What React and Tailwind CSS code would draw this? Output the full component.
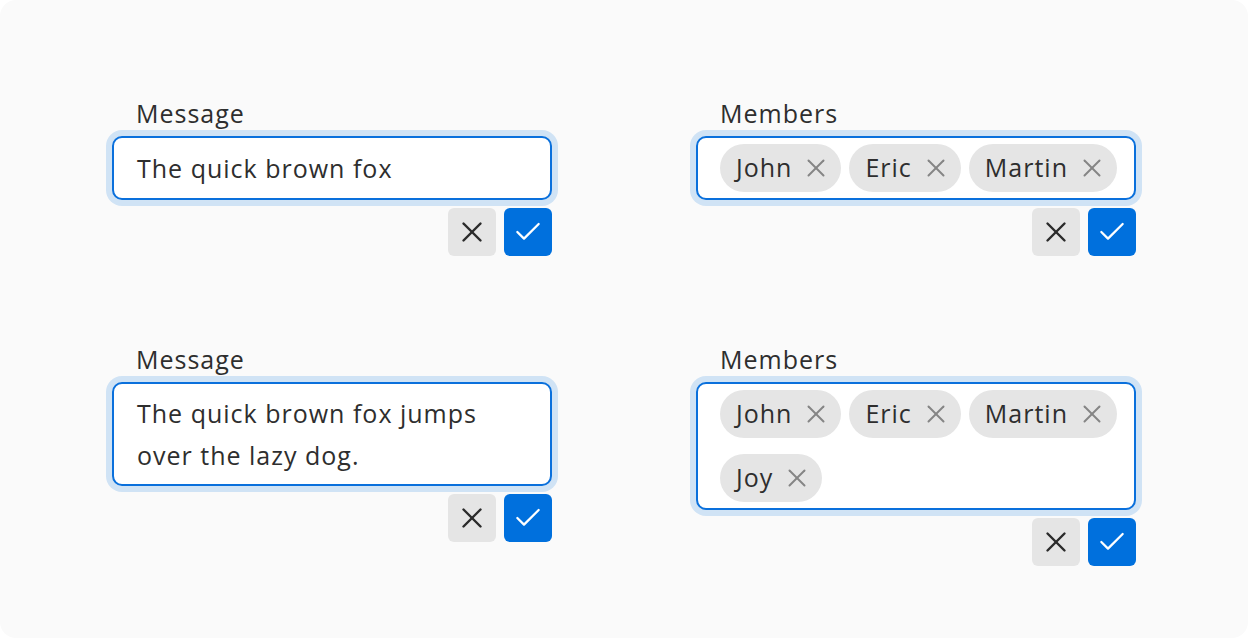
import { X, Check } from 'lucide-react';

function Actions() {
  return (
    <div className="mt-2 flex justify-end gap-2">
      <button className="grid h-12 w-12 place-items-center rounded-md bg-[#e5e5e5] text-[#2b2b2b]">
        <X className="h-[34px] w-[34px]" strokeWidth={1.7} />
      </button>
      <button className="grid h-12 w-12 place-items-center rounded-md bg-[#0070dd] text-white">
        <Check className="h-[32px] w-[32px]" strokeWidth={1.7} />
      </button>
    </div>
  );
}

function Field({ label, children }) {
  return (
    <div>
      <div className="mb-[8px] pl-[24px] leading-[30px] text-[#2e2e2e]">{label}</div>
      <div className="rounded-[10px] border-2 border-[#0a70dc] bg-white shadow-[0_0_0_6px_#d0e3f5]">
        {children}
      </div>
      <Actions />
    </div>
  );
}

function Chip({ name }) {
  return (
    <span className="flex h-12 items-center gap-[9px] rounded-full bg-[#e5e5e5] pl-4 pr-[10px] text-[#2e2e2e]">
      {name}
      <X className="h-[30px] w-[30px] text-[#858585]" strokeWidth={1.6} />
    </span>
  );
}

function Members({ names }) {
  return (
    <div className="flex flex-wrap gap-x-2 gap-y-4 py-[6px] pl-[22px] pr-[8px]">
      {names.map((n) => (
        <Chip key={n} name={n} />
      ))}
    </div>
  );
}

export default function App() {
  return (
    <div className="h-[638px] w-[1248px] bg-white">
      <div
        className="h-full w-full rounded-2xl bg-[#fafafa] pl-[112px] pt-[98px] text-[25px] tracking-[0.04em]"
        style={{ fontFamily: '"Open Sans", Lato, sans-serif' }}
      >
        <div className="grid grid-cols-[440px_440px] gap-x-[144px] gap-y-[88px]">
          <Field label="Message">
            <div className="px-[23px] py-[9px] leading-[42px] text-[#2e2e2e]">The quick brown fox</div>
          </Field>
          <Field label="Members">
            <Members names={['John', 'Eric', 'Martin']} />
          </Field>
          <Field label="Message">
            <div className="px-[23px] py-[8px] pr-[40px] leading-[42px] text-[#2e2e2e]">
              The quick brown fox jumps over the lazy dog.
            </div>
          </Field>
          <Field label="Members">
            <Members names={['John', 'Eric', 'Martin', 'Joy']} />
          </Field>
        </div>
      </div>
    </div>
  );
}
